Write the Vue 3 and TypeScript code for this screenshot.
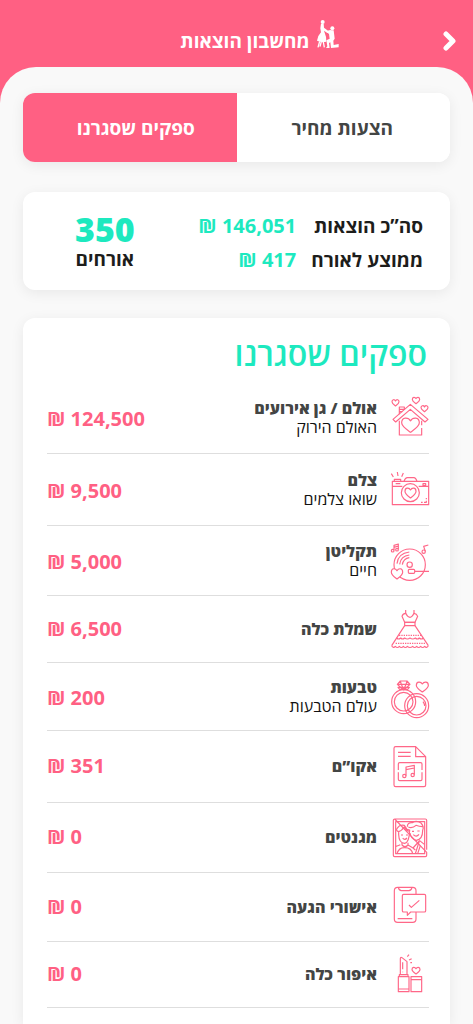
<script setup lang="ts">
import { ref } from 'vue'

interface Shape {
  d: string
  mask?: boolean
  dotted?: boolean
}

interface Supplier {
  name: string
  vendor?: string
  price: string
  iconTop: number
  iconHeight: number
  shapes: Shape[]
}

function heart(x: number, y: number, w: number, h: number): string {
  const cx = x + w / 2
  return [
    `M${cx} ${y + h * 0.2}`,
    `C${cx - w * 0.12} ${y - h * 0.06} ${x} ${y - h * 0.1} ${x} ${y + h * 0.34}`,
    `C${x} ${y + h * 0.6} ${cx - w * 0.2} ${y + h * 0.82} ${cx} ${y + h}`,
    `C${cx + w * 0.2} ${y + h * 0.82} ${x + w} ${y + h * 0.6} ${x + w} ${y + h * 0.34}`,
    `C${x + w} ${y - h * 0.1} ${cx + w * 0.12} ${y - h * 0.06} ${cx} ${y + h * 0.2}Z`,
  ].join(' ')
}

function circle(cx: number, cy: number, r: number): string {
  return `M${cx - r} ${cy}a${r} ${r} 0 1 0 ${r * 2} 0a${r} ${r} 0 1 0 ${-r * 2} 0Z`
}

const house: Shape[] = [
  { d: heart(6, 14, 21, 19) },
  { d: heart(67, 7, 22, 19) },
  { d: heart(93, 32, 21, 18) },
  { d: 'M28 58V36H43V45M28 43H42M28 50H37' },
  { d: 'M61 28L9 73L17 81L61 43L105 81L114 73Z' },
  { d: 'M28 77V120H95V99M95 91V77' },
  { d: heart(35, 69, 53, 43) },
]

const camera: Shape[] = [
  { d: 'M4 11L10 21M22 6L24 18M40 9L35 20' },
  { d: 'M7 34H116V104H7ZM7 49H37M86 49H116M13 34V28H32V34M17 41H31' },
  { d: 'M42 34Q46 23 52 23H72Q77 23 81 34' },
  { d: 'M99 41H107V47H99Z' },
  { d: circle(61, 68, 27) },
  { d: heart(45, 54, 33, 30) },
  { d: 'M93 97H98M102 97H109V92M109 84V88' },
]

const record: Shape[] = [
  { d: circle(59, 68, 47) },
  { d: circle(59, 68, 8) },
  { d: 'M21 65Q24 34 58 30M29 67Q32 42 58 39M37 68Q40 50 58 47' },
  { d: 'M58 82H71Q74 82 74 85V91Q74 94 71 94H58Q55 94 55 91V85Q55 82 58 82ZM74 88H117' },
  { d: heart(4, 80, 34, 31), mask: true },
  { d: circle(8, 26, 4) },
  { d: circle(21, 23, 4) },
  { d: 'M12 25V10L25 6V22M12 16L25 12' },
  { d: circle(101, 29, 5) },
  { d: 'M106 28L101 13L115 9' },
]

const dress: Shape[] = [
  { d: 'M47 6V17M72 6V17' },
  { d: 'M47 16Q38 17 36 25L44 43H75L83 25Q80 17 72 16Q66 28 60 28Q53 28 47 16Z' },
  { d: 'M44 43H75V53H44Z' },
  { d: 'M44 53L5 113M75 53L115 113' },
  { d: 'M5 113Q10 122 16 115Q22 122 28 115Q34 122 40 115Q46 122 52 115Q60 122 68 115Q74 122 80 115Q86 122 92 115Q98 122 104 115Q110 122 115 113' },
  { d: 'M20 90Q26 96 32 90Q38 96 44 90Q52 96 60 90Q68 96 76 90Q82 96 88 90Q94 96 100 90' },
  { d: 'M27 82H94M17 106H105', dotted: true },
]

const rings: Shape[] = [
  { d: 'M31 6H51L60 16L41 33L22 16ZM22 16H60M31 6L34 16L41 32L48 16L51 6M24 25H58L53 31H29Z' },
  { d: circle(41, 68, 36) },
  { d: circle(41, 68, 28) },
  { d: circle(80, 80, 36) },
  { d: circle(80, 80, 28) },
  { d: 'M99 68Q104 75 104 81' },
  { d: heart(79, 9, 36, 30) },
]

const songSheet: Shape[] = [
  { d: 'M17 5H77L107 35V120Q107 125 102 125H17Q12 125 12 120V10Q12 5 17 5ZM77 5V35H107' },
  { d: 'M24 22H62M24 34H62' },
  { d: 'M25 75V57Q25 53 29 53H92Q96 53 96 57V75M96 82V103Q96 107 92 107H29Q25 107 25 103V82' },
  { d: circle(43, 93, 5) },
  { d: circle(68, 90, 5) },
  { d: 'M48 92V66L73 61V89M48 74L73 69' },
]

const photo: Shape[] = [
  { d: 'M14 6H106Q110 6 110 10V98M110 106V115Q110 119 106 119H14Q10 119 10 115V10Q10 6 14 6Z' },
  { d: 'M17 14H104V110H17Z' },
  { d: 'M26 44Q15 41 23 32Q29 22 43 25L51 37L59 39Q58 77 44 79Q27 78 26 53ZM26 44Q35 42 42 30Q49 43 59 43' },
  { d: 'M52 29Q52 16 67 17Q79 9 93 18Q103 29 98 40Q98 68 79 70Q63 67 60 48M55 30Q67 35 78 25Q87 29 98 29' },
  { d: 'M33 54H39M48 54H54M38 63Q44 71 51 63M66 43H72M82 42H89M70 53Q79 62 87 52' },
  { d: 'M21 110Q27 91 44 92Q64 92 68 110M36 78V84Q45 94 54 84V77M17 88Q23 87 31 83M54 84L69 93L88 72L76 110M69 93L76 99M88 70L103 82M91 86L83 110' },
]

const rsvp: Shape[] = [
  { d: 'M78 28V17Q78 7 68 7H23Q13 7 13 17V102Q13 112 23 112H68Q78 112 78 102V81' },
  { d: 'M25 7Q27 17 34 17H57Q64 17 66 7M23 101H67' },
  { d: 'M41 28H103Q107 28 107 32V77Q107 81 103 81H62L52 91V81H41Q37 81 37 77V32Q37 28 41 28Z', mask: true },
  { d: 'M57 60L64 67L88 46' },
]

const lipstick: Shape[] = [
  { d: 'M31 68V20Q31 14 36 17L51 29V68M38 31V52M38 59V61' },
  { d: 'M28 74V68H54V74M25 74H57V119H25ZM25 111H57' },
  { d: 'M63 74H95V119H63ZM63 83H95' },
  { d: heart(66, 46, 24, 20) },
  { d: 'M52 14L57 8M57 24L65 20M61 32H66' },
]

const suppliers: Supplier[] = [
  { name: 'אולם / גן אירועים', vendor: 'האולם הירוק', price: '124,500', iconTop: 3, iconHeight: 42, shapes: house },
  { name: 'צלם', vendor: 'שואו צלמים', price: '9,500', iconTop: -6, iconHeight: 42, shapes: camera },
  { name: 'תקליטן', vendor: 'חיים', price: '5,000', iconTop: -6, iconHeight: 40, shapes: record },
  { name: 'שמלת כלה', price: '6,500', iconTop: 6, iconHeight: 37, shapes: dress },
  { name: 'טבעות', vendor: 'עולם הטבעות', price: '200', iconTop: -6, iconHeight: 38, shapes: rings },
  { name: 'אקו”ם', price: '351', iconTop: 0, iconHeight: 42, shapes: songSheet },
  { name: 'מגנטים', price: '0', iconTop: 0, iconHeight: 40, shapes: photo },
  { name: 'אישורי הגעה', price: '0', iconTop: 6, iconHeight: 39, shapes: rsvp },
  { name: 'איפור כלה', price: '0', iconTop: 12, iconHeight: 36, shapes: lipstick },
]

const tabs = ['הצעות מחיר', 'ספקים שסגרנו']
const activeTab = ref(1)
</script>

<template>
  <div class="app" dir="rtl" lang="he">
    <header class="header">
      <button class="back" type="button" aria-label="חזרה">
        <svg width="14" height="20" viewBox="0 0 14 20" aria-hidden="true">
          <path d="M3 3L10 10L3 17" />
        </svg>
      </button>
      <h1 class="title">
        <svg class="couple" width="22" height="28" viewBox="0 0 66 84" aria-hidden="true">
          <circle cx="17" cy="6" r="6" />
          <path d="M12 11H20L21 23L33 32L42 31L45 36L31 39L21 32L23 38Q29 51 28 65Q14 69 0 62Q2 47 12 37L10 25Z" />
          <circle cx="46" cy="25" r="6" />
          <path d="M39 31H50L53 56L49 62L50 75L65 72V82L42 84L40 67L36 69L38 84H27L31 79L28 61L38 56L36 42L29 36L31 33Z" />
          <path d="M8 64L3 82M19 66L22 82M13 65L9 80" class="limb" />
        </svg>
        <span>מחשבון הוצאות</span>
      </h1>
    </header>

    <main class="content">
      <div class="tabs" role="tablist">
        <button
          v-for="(tab, index) in tabs"
          :key="tab"
          class="tab"
          :class="{ active: activeTab === index }"
          type="button"
          role="tab"
          :aria-selected="activeTab === index"
          @click="activeTab = index"
        >
          {{ tab }}
        </button>
      </div>

      <section class="summary">
        <dl class="totals">
          <dt>סה”כ הוצאות</dt>
          <dd>146,051 ₪</dd>
          <dt>ממוצע לאורח</dt>
          <dd>417 ₪</dd>
        </dl>
        <p class="guests">
          <strong>350</strong>
          <span>אורחים</span>
        </p>
      </section>

      <section class="suppliers">
        <h2>ספקים שסגרנו</h2>
        <ul>
          <li
            v-for="supplier in suppliers"
            :key="supplier.name"
            class="row"
            :class="{ detailed: supplier.vendor }"
          >
            <svg
              class="icon"
              width="39"
              :height="supplier.iconHeight"
              :viewBox="`0 ${supplier.iconTop} 117 ${supplier.iconHeight * 3}`"
              aria-hidden="true"
            >
              <path
                v-for="(shape, index) in supplier.shapes"
                :key="index"
                :d="shape.d"
                :class="{ mask: shape.mask, dotted: shape.dotted }"
              />
            </svg>
            <div class="label">
              <h3>{{ supplier.name }}</h3>
              <p v-if="supplier.vendor">{{ supplier.vendor }}</p>
            </div>
            <span class="price">{{ supplier.price }} ₪</span>
          </li>
        </ul>
      </section>
    </main>
  </div>
</template>

<style>
body {
  margin: 0;
  background: #ff6083;
}
</style>

<style scoped>
* {
  box-sizing: border-box;
}

.app {
  display: flex;
  flex-direction: column;
  min-height: 100vh;
  background: #ff6083;
  color: #1d1d1b;
  font-family: "Open Sans", "Noto Sans", "DejaVu Sans", sans-serif;
}

h1,
h2,
h3,
p,
ul,
dl,
dd {
  margin: 0;
  padding: 0;
}

button {
  border: 0;
  padding: 0;
  font: inherit;
  cursor: pointer;
}

.header {
  display: flex;
  align-items: center;
  height: 67px;
  padding: 14px 16px 0 76px;
  color: #fff;
}

.back {
  display: flex;
  background: none;
}

.back path {
  fill: none;
  stroke: #fff;
  stroke-width: 5;
  stroke-linecap: round;
  stroke-linejoin: round;
}

.title {
  flex: 1;
  display: flex;
  align-items: center;
  justify-content: center;
  gap: 7px;
  font-size: 19px;
  line-height: 28px;
  font-weight: 700;
}

.couple {
  margin-bottom: 14px;
  fill: #fff;
}

.limb {
  stroke: #fff;
  stroke-width: 4;
}

.content {
  flex: 1;
  display: flex;
  flex-direction: column;
  padding: 26px 23px 0;
  border-radius: 36px 36px 0 0;
  background: #f9f9f9;
}

.tabs,
.summary,
.suppliers {
  background: #fff;
  border-radius: 12px;
  box-shadow: 0 3px 14px rgba(0, 0, 0, 0.07);
}

.tabs {
  display: flex;
  height: 69px;
  overflow: hidden;
}

.tab {
  flex: 1 1 50%;
  padding-right: 2px;
  background: #fff;
  color: #434544;
  font-size: 19px;
  font-weight: 700;
}

.tab.active {
  padding: 0 0 0 12px;
  background: #ff6083;
  color: #fff;
}

.summary {
  display: flex;
  justify-content: space-between;
  align-items: center;
  margin-top: 30px;
  padding: 17px 27px 13px 52px;
  font-size: 19px;
  line-height: 34px;
  font-weight: 700;
}

.totals {
  display: grid;
  grid-template-columns: auto auto;
  column-gap: 15px;
}

.totals dd {
  font-size: 20px;
}

.totals dd,
.guests strong {
  color: #1de9bf;
}

.guests {
  display: flex;
  flex-direction: column;
  align-items: center;
  line-height: 28px;
}

.guests strong {
  font-size: 34px;
  line-height: 32px;
}

.suppliers {
  flex: 1;
  margin-top: 28px;
  padding: 12px 21px 16px 24px;
  border-radius: 12px 12px 0 0;
}

.suppliers h2 {
  margin-bottom: 4px;
  padding-right: 2px;
  color: #1de9bf;
  font-size: 32px;
  line-height: 48px;
  font-weight: 600;
}

.suppliers ul {
  list-style: none;
}

.row {
  display: flex;
  align-items: center;
  padding: 14px 0 15px;
  border-bottom: 1px solid #dedede;
}

.icon {
  flex: none;
  overflow: visible;
}

.icon path {
  fill: none;
  stroke: #ff6788;
  stroke-width: 3.5;
  stroke-linejoin: round;
}

.icon .mask {
  fill: #fff;
}

.icon .dotted {
  stroke-dasharray: 4 3;
}

.label {
  flex: 1;
  margin: -4px 13px -4px 0;
}

.label h3 {
  color: #434544;
  font-size: 16px;
  line-height: 20px;
  font-weight: 800;
}

.label p {
  color: #111;
  font-size: 16px;
  line-height: 18px;
}

.price {
  color: #ff6083;
  font-size: 20px;
  line-height: 28px;
  font-weight: 700;
}

.detailed .price {
  padding-top: 4px;
}
</style>
